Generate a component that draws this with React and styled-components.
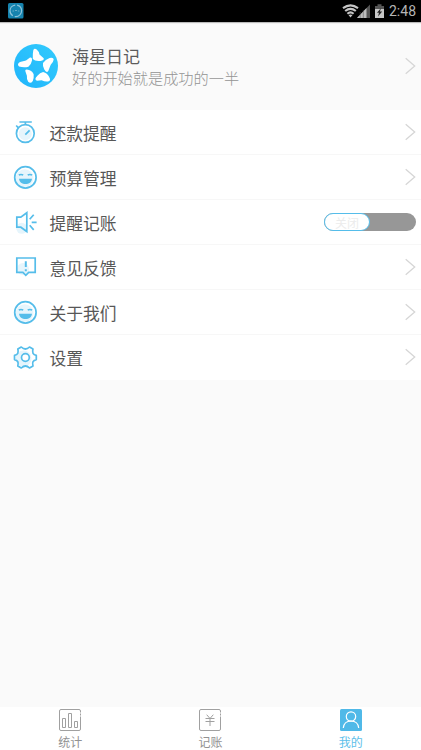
import React from "react";
import styled, { createGlobalStyle } from "styled-components";

const BLUE = "#55bdea";
const PALE = "#e6f5fc";

function StatusBar() {
    return (
        <StatusStyled>
            <svg width="16" height="16" viewBox="0 0 16 16">
                <rect width="15.5" height="15.5" rx="1.5" fill="#1683ae" />
                <circle cx="7.8" cy="7.8" r="5.8" fill="none" stroke="#8dc3d9" strokeWidth="1.2" strokeDasharray="10 2 14 2" />
                <path d="M4.5 8h1.6M7 7.5h2M9.8 8h1.6" stroke="#65aeca" strokeWidth="1" />
            </svg>
            <StatusRightStyled>
                <svg width="44" height="18" viewBox="0 0 44 18">
                    <g fill="none" stroke="#c6c6c6" strokeWidth="2.1">
                        <path d="M1 6.1Q8.5 0.5 16 6.1" />
                        <path d="M3.2 9Q8.500 4.600 13.800 9" />
                        <path d="M5.4 11.700Q8.500 9 11.600 11.700" />
                    </g>
                    <path d="M6.5 13.1Q8.5 12 10.5 13.1L8.5 15.5z" fill="#c6c6c6" />
                    <path d="M28 2.5V16H15z" fill="#555" />
                    <path d="M24.5 6V16H15z" fill="#bdbdbd" />
                    <path d="M18.2 10v6M21.3 8v8" stroke="#555" strokeWidth=".5" />
                    <path d="M35.5 2.3h4v1.7h2.5v4h-9V4h2.5z" fill="#555" />
                    <path d="M33 7h9v9h-9z" fill="#c6c6c6" />
                    <path d="M39 6l-4 4.8h2L36 14.5l4.2-5h-2.3z" fill="#222" />
                </svg>
                <ClockStyled>2:48</ClockStyled>
            </StatusRightStyled>
        </StatusStyled>
    );
}

function StarLogo() {
    return (
        <svg width="44" height="44" viewBox="0 0 44 44">
            <defs>
                <linearGradient id="logoFill" x1="0" y1="1" x2="1" y2="0">
                    <stop offset="0" stopColor="#20b4fb" />
                    <stop offset="1" stopColor="#32cbfd" />
                </linearGradient>
            </defs>
            <circle cx="22" cy="22" r="22" fill="url(#logoFill)" />
            <g fill="#fff">
                <path d="M19.3 6.2Q20.2 3.8 22.7 5.4Q25 7.2 25.5 10.5L29.7 14.2Q30.4 16.4 26.5 16.9Q21 17.5 18.8 15Q18.5 10.3 19.3 6.2z" />
                <path d="M35.6 14Q39.7 13.2 39.7 15.5Q39.5 18 36.7 20.8L34.3 27Q32.5 29.5 30.3 25.6Q28.4 22 29 19Q31 15.8 35.6 14z" />
                <path d="M35.2 33Q37.4 36.8 34 37.5Q31 38 27.6 36.2L23 36.7Q19.6 35.3 23.4 31.7Q26 28.7 29.1 27.9Q33.4 28.8 35.2 33z" />
                <path d="M18.8 37Q16.5 40.3 14.2 37.7Q12.5 35.3 12.9 31.8L11.2 26.8Q11.5 24.8 15 26Q18.7 27 19.7 30.5Q20 34 18.8 37z" />
                <path d="M5 22.5Q2.5 20.2 6 18.1L12 16.4L16 13.5Q18.4 13 18 16.4Q17 21 14.4 22.8Q9.7 24 5 22.5z" />
            </g>
        </svg>
    );
}

function Arrow() {
    return (
        <svg width="11" height="18" viewBox="0 0 11 18" fill="none" stroke="#d6d6d6" strokeWidth="1.3">
            <path d="M.7 1.2l9 7.800-9 7.800" />
        </svg>
    );
}

function TimerIcon() {
    return (
        <RowIconStyled viewBox="0 0 27 27">
            <circle cx="13.3" cy="14.7" r="6.5" fill={PALE} stroke="none" />
            <circle cx="13.3" cy="14.5" r="8.9" />
            <path d="M7.4 3h12.4M13.4 3v2.6M4.2 6.500l2.200 2.400M13.300 15.600l4.300-4.300" />
        </RowIconStyled>
    );
}

function SmileIcon() {
    return (
        <RowIconStyled viewBox="0 0 27 27">
            <circle cx="12.7" cy="14" r="8.8" fill={PALE} stroke="none" />
            <circle cx="13.4" cy="13.4" r="10.7" />
            <path d="M6.800 11q2.200-1 4.400 0M15.700 11q2.200-1 4.400 0" />
            <path d="M7 14.800h13c-.4 3.300-3 5.300-6.500 5.300S7.400 18.100 7 14.800z" fill={BLUE} stroke="none" />
        </RowIconStyled>
    );
}

function SpeakerIcon() {
    return (
        <RowIconStyled viewBox="0 0 27 27">
            <circle cx="9.700" cy="19.300" r="5.500" fill={PALE} stroke="none" />
            <path d="M4.800 8.200h4l6-4.500v18.800l-6-4.300h-4z" />
            <path d="M17.700 10.300l4-4.600M19.700 13.300h4.900M17.700 16.300l4 4.600" />
        </RowIconStyled>
    );
}

function FeedbackIcon() {
    return (
        <RowIconStyled viewBox="0 0 27 27">
            <circle cx="11" cy="15" r="6" fill={PALE} stroke="none" />
            <path d="M4.800 4h18.400v14.300h-6.500l-2.900 3-2.900-3H4.800z" />
            <path d="M13.800 7.200v5.800M13.800 15.200v2" strokeWidth="2" />
        </RowIconStyled>
    );
}

function GearIcon() {
    return (
        <RowIconStyled viewBox="0 0 27 27">
            <circle cx="11.500" cy="14.500" r="8" fill={PALE} stroke="none" />
            <path d="M9.300 3q4.100 4 8.200 0l3.500 2.100q-1.600 5.200 3.300 6.300v4.200q-4.900 1.100-3.300 6.300l-3.500 2.100q-4.100-4-8.200 0l-3.500-2.100q1.600-5.200-3.300-6.300v-4.200q4.900-1.100 3.300-6.300z" strokeLinejoin="round" />
            <circle cx="13.400" cy="13.500" r="3.900" fill="#fff" />
        </RowIconStyled>
    );
}

function ChartIcon() {
    return (
        <svg width="24" height="24" viewBox="0 0 24 24" fill="none" stroke="#a0a0a0">
            <path d="M22.500 4.500V3q0-1.500-1.500-1.500H3Q1.500 1.500 1.500 3v18q0 1.500 1.500 1.500h18q1.500 0 1.500-1.500V8.500M22.500 5.500v2" />
            <path d="M4.500 10.500h3v9h-3zM10.500 5.500h3v14h-3zM16.500 13.500h3v6h-3z" />
        </svg>
    );
}

function YuanIcon() {
    return (
        <svg width="24" height="24" viewBox="0 0 24 24" fill="none" stroke="#a0a0a0">
            <path d="M22.500 4.500V3q0-1.500-1.500-1.500H3Q1.500 1.500 1.500 3v18q0 1.500 1.500 1.500h18q1.500 0 1.500-1.500V8.500M22.500 5.500v2" />
            <path d="M8.700 6.700L12 10.500l3.300-3.800M7.500 10.500h9M7.500 13.500h9M12 10.500v7.500" />
        </svg>
    );
}

function UserIcon() {
    return (
        <svg width="24" height="24" viewBox="0 0 24 24" fill="none" stroke="#fff" strokeWidth="1.200">
            <rect x="1" y="1" width="22" height="22" rx="1.500" fill="#50b9e8" stroke="none" />
            <circle cx="12" cy="8.500" r="4.700" />
            <path d="M4.300 20q.7-7 7.700-7t7.700 7" />
        </svg>
    );
}

const rows = [
    { text: "还款提醒", Icon: TimerIcon },
    { text: "预算管理", Icon: SmileIcon },
    { text: "提醒记账", Icon: SpeakerIcon, toggle: true },
    { text: "意见反馈", Icon: FeedbackIcon },
    { text: "关于我们", Icon: SmileIcon },
    { text: "设置", Icon: GearIcon },
];

const tabs = [
    { text: "统计", Icon: ChartIcon },
    { text: "记账", Icon: YuanIcon },
    { text: "我的", Icon: UserIcon, active: true },
];

function App() {
    return (
        <PageStyled>
            <GlobalStyle />
            <StatusBar />

            <ProfileStyled>
                <StarLogo />
                <ProfileTextStyled>
                    <NameStyled>海星日记</NameStyled>
                    <MottoStyled>好的开始就是成功的一半</MottoStyled>
                </ProfileTextStyled>
                <Arrow />
            </ProfileStyled>

            <ListStyled>
                {rows.map(({ text, Icon, toggle }) => (
                    <RowStyled key={text}>
                        <Icon />
                        <RowTextStyled>{text}</RowTextStyled>
                        {toggle ? <ToggleStyled><KnobStyled>关闭</KnobStyled></ToggleStyled> : <Arrow />}
                    </RowStyled>
                ))}
            </ListStyled>

            <TabBarStyled>
                {tabs.map(({ text, Icon, active }) => (
                    <TabStyled key={text} $active={active}>
                        <Icon />
                        <span>{text}</span>
                    </TabStyled>
                ))}
            </TabBarStyled>
        </PageStyled>
    );
}

const GlobalStyle = createGlobalStyle`
    * {
        box-sizing: border-box;
    }
    body {
        margin: 0;
        font-family: "Noto Sans CJK SC", sans-serif;
    }
    svg {
        display: block;
        flex-shrink: 0;
    }
`

const PageStyled = styled.div`
    display: flex;
    flex-direction: column;
    height: 750px;
    background: #fafafa;
    overflow: hidden;
`

const StatusStyled = styled.header`
    display: flex;
    justify-content: space-between;
    align-items: center;
    height: 22px;
    padding: 0 5px 0 8px;
    background: #000;
    box-shadow: 0 1px 1px #bbb;
`

const StatusRightStyled = styled.div`
    display: flex;
    align-items: center;
    gap: 3px;
`

const ClockStyled = styled.span`
    font-family: Roboto, sans-serif;
    font-size: 14px;
    line-height: 22px;
    color: #b5b5b5;
`

const ProfileStyled = styled.section`
    display: flex;
    align-items: center;
    height: 88px;
    padding: 0 5px 0 14px;
`

const ProfileTextStyled = styled.div`
    flex: 1;
    margin-left: 14px;
`

const NameStyled = styled.div`
    font-size: 17px;
    line-height: 22px;
    color: #5c5c5c;
`

const MottoStyled = styled.div`
    font-size: 15.2px;
    line-height: 21px;
    font-weight: 300;
    color: #949494;
`

const ListStyled = styled.main`
    flex: 1;
`

const RowStyled = styled.div`
    display: flex;
    align-items: center;
    height: 45px;
    padding: 0 5px 0 12px;
    background: #fff;
    border-bottom: 1px solid #f7f7f7;

    &:last-child {
        border-bottom-color: #fff;
    }
`

const RowIconStyled = styled.svg`
    width: 27px;
    height: 27px;
    fill: none;
    stroke: ${BLUE};
    stroke-width: 1.7;
`

const RowTextStyled = styled.span`
    flex: 1;
    margin-left: 10.5px;
    padding-top: 1px;
    font-size: 16.8px;
    line-height: 24px;
    color: #575757;
`

const ToggleStyled = styled.div`
    width: 92px;
    height: 18px;
    border-radius: 9px;
    background: #979797;
`

const KnobStyled = styled.div`
    width: 46px;
    height: 18px;
    border: 1.5px solid ${BLUE};
    border-radius: 9px;
    background: #fff;
    font-size: 12px;
    line-height: 17px;
    text-align: center;
    color: #ececec;
`

const TabBarStyled = styled.nav`
    display: flex;
    height: 43px;
    background: #fff;
`

const TabStyled = styled.div`
    flex: 1;
    display: flex;
    flex-direction: column;
    align-items: center;
    padding-top: 1px;
    font-size: 12px;
    line-height: 20px;
    color: ${props => props.$active ? "#5cc0ea" : "#929292"};
`

export default App
